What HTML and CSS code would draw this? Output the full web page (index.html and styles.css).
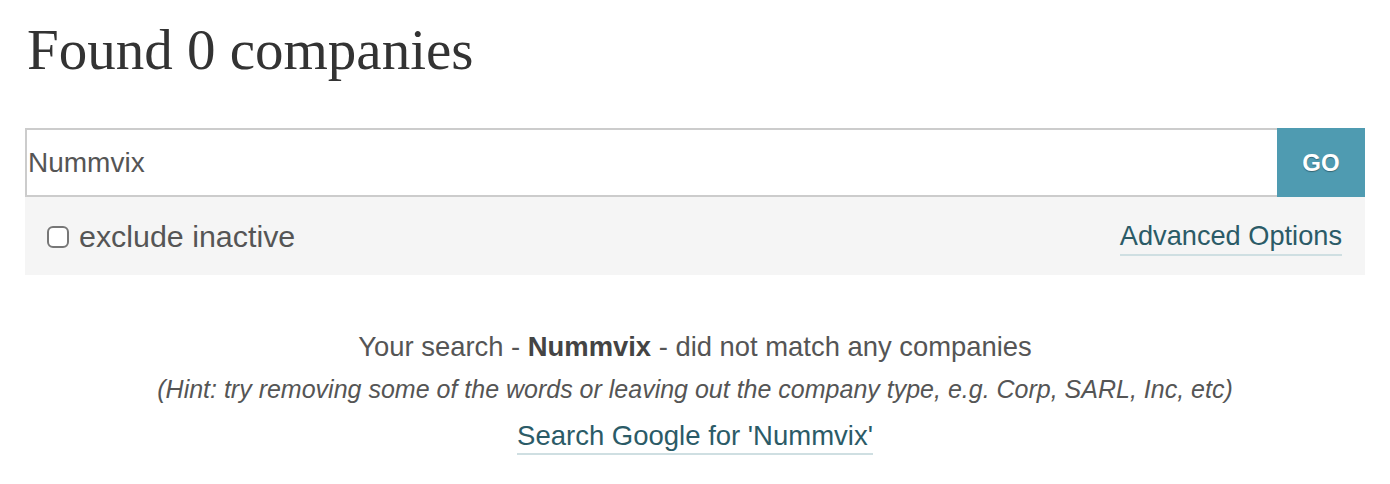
FILE: index.html
```html
<!DOCTYPE html>
<html lang="en">
<head>
<meta charset="utf-8">
<title>Company search</title>
<link rel="stylesheet" href="styles.css">
</head>
<body>
<main class="page">
  <h1 class="title">Found 0 companies</h1>

  <form class="search">
    <div class="search-row">
      <input class="search-input" type="text" value="Nummvix">
      <button class="search-go" type="button">GO</button>
    </div>
    <div class="search-options">
      <label class="option">
        <span class="checkbox"></span>
        <span>exclude inactive</span>
      </label>
      <a class="link" href="#">Advanced Options</a>
    </div>
  </form>

  <section class="no-results">
    <p class="message">Your search - <strong>Nummvix</strong> - did not match any companies</p>
    <p class="hint">(Hint: try removing some of the words or leaving out the company type, e.g. Corp, SARL, Inc, etc)</p>
    <p class="google"><a class="link" href="#">Search Google for 'Nummvix'</a></p>
  </section>
</main>
</body>
</html>
```

FILE: styles.css
```css
* {
  box-sizing: border-box;
}

html, body {
  margin: 0;
  background: #fff;
}

body {
  font-family: "Liberation Sans", Arial, sans-serif;
  color: #555;
}

.page {
  padding: 0 25px;
}

.title {
  margin: 0;
  padding-top: 14px;
  padding-left: 2px;
  font-family: "Liberation Serif", "Times New Roman", serif;
  font-weight: 400;
  font-size: 57px;
  line-height: 72px;
  color: #333;
}

.search {
  margin-top: 42px;
}

.search-row {
  display: flex;
  height: 69px;
}

.search-input {
  flex: 1;
  min-width: 0;
  height: 100%;
  margin: 0;
  border: 2px solid #ccc;
  border-right: 0;
  padding: 0 0 0 1px;
  font-family: "Liberation Sans", Arial, sans-serif;
  font-size: 28px;
  color: #555;
  background: #fff;
  outline: none;
}

.search-go {
  width: 88px;
  height: 100%;
  margin: 0;
  border: 0;
  background: #4f9bb1;
  color: #fff;
  font-family: "Liberation Sans", Arial, sans-serif;
  font-weight: 700;
  font-size: 24px;
  text-shadow: 0 1px 1px rgba(0, 0, 0, 0.35);
}

.search-options {
  display: flex;
  align-items: center;
  justify-content: space-between;
  height: 78px;
  padding: 0 23px 0 22px;
  background: #f5f5f5;
}

.option {
  display: flex;
  align-items: center;
  gap: 10px;
  font-size: 30.4px;
  color: #555;
}

.checkbox {
  width: 22px;
  height: 22px;
  border: 2px solid #777;
  border-radius: 6px;
  background: #fff;
  margin-top: 2px;
}

.link {
  color: #2b5b67;
  text-decoration: none;
  border-bottom: 2px solid #cfdfe2;
  padding-bottom: 2px;
}

.search-options .link {
  font-size: 27.2px;
  margin-top: 4px;
}

.no-results {
  text-align: center;
  padding-top: 52px;
}

.no-results p {
  margin: 0;
}

.message {
  font-size: 27.4px;
  line-height: 40px;
}

.message strong {
  color: #444;
}

.hint {
  font-style: italic;
  font-size: 25px;
  line-height: 44px;
}

.google {
  font-size: 27.5px;
  line-height: 50px;
}
```
